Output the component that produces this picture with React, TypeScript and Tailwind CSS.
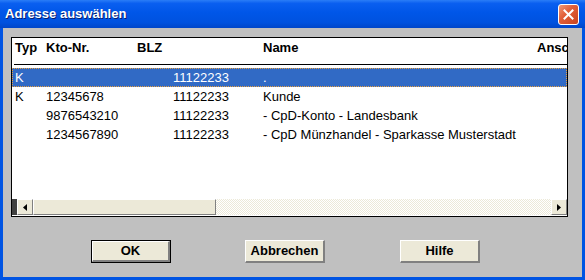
import React from 'react';

interface Row {
  typ: string;
  kto: string;
  blz: string;
  name: string;
  selected?: boolean;
}

const rows: Row[] = [
  { typ: 'K', kto: '', blz: '11122233', name: '.', selected: true },
  { typ: 'K', kto: '12345678', blz: '11122233', name: 'Kunde' },
  { typ: '', kto: '9876543210', blz: '11122233', name: '- CpD-Konto - Landesbank' },
  { typ: '', kto: '1234567890', blz: '11122233', name: '- CpD Münzhandel - Sparkasse Musterstadt' },
];

const font = "font-['Liberation_Sans',Arial,sans-serif]";

const XpButton: React.FC<{ label: string; isDefault?: boolean }> = ({ label, isDefault }) => (
  <button
    className={`w-[80px] h-[23px] ${isDefault ? 'border border-black' : ''} bg-[#ece9d8] p-0`}
  >
    <span
      className={`flex h-full w-full items-center justify-center border-t border-l border-t-white border-l-white border-b-2 border-r-2 border-b-[#808080] border-r-[#808080] text-[13px] font-bold text-black ${font}`}
    >
      {label}
    </span>
  </button>
);

const ArrowButton: React.FC<{ dir: 'left' | 'right' }> = ({ dir }) => (
  <div className="flex h-full w-[16px] shrink-0 items-center justify-center bg-[#ece9d8] border-t border-l border-t-white border-l-white border-b border-r border-b-[#808080] border-r-[#808080]">
    <svg width="4" height="7" viewBox="0 0 4 7">
      {dir === 'left' ? <path d="M4 0 L0 3.5 L4 7 Z" fill="#000" /> : <path d="M0 0 L4 3.5 L0 7 Z" fill="#000" />}
    </svg>
  </div>
);

export default function App() {
  return (
    <div className="w-[585px] h-[280px] bg-[#0054e3] flex flex-col overflow-hidden">
      {/* title bar */}
      <div className="h-[28px] flex items-center justify-between pl-[5px] pr-[6px] bg-[linear-gradient(180deg,#2a7df7_0%,#0a5ff0_12%,#0056e8_45%,#0052df_80%,#0046c9_100%)]">
        <span className={`text-white font-bold text-[13px] [text-shadow:1px_1px_0_#0a1e6e] ${font}`}>
          Adresse auswählen
        </span>
        <div className="w-[21px] h-[21px] rounded-[3px] border border-white bg-[linear-gradient(135deg,#f09a78_0%,#e2603a_40%,#c8431e_100%)] flex items-center justify-center">
          <svg width="11" height="11" viewBox="0 0 11 11">
            <path d="M1.5 1.5 L9.5 9.5 M9.5 1.5 L1.5 9.5" stroke="#fff" strokeWidth="2" strokeLinecap="square" />
          </svg>
        </div>
      </div>

      {/* body */}
      <div className="flex-1 mx-[3px] mb-[3px] bg-[#c0c0c0] flex flex-col pl-[8px] pt-[9px]">
        <div className={`w-[557px] h-[180px] border border-black bg-white flex flex-col overflow-hidden text-[13px] text-black ${font}`}>
          {/* header */}
          <div className="h-[26px] flex pl-[3px] pt-[1px] leading-[18px] font-bold text-[13px] whitespace-nowrap overflow-hidden">
            <span className="w-[31px] shrink-0">Typ</span>
            <span className="w-[91px] shrink-0">Kto-Nr.</span>
            <span className="w-[126px] shrink-0">BLZ</span>
            <span className="w-[274px] shrink-0">Name</span>
            <span className="shrink-0">Anschrift</span>
          </div>
          <div className="ml-[2px] h-[1px] bg-black" />
          <div className="h-[3px]" />

          {/* rows */}
          <div className="flex-1 flex flex-col">
            {rows.map((r, i) => (
              <div
                key={i}
                className={`h-[19px] flex items-center pl-[2px] whitespace-nowrap ${
                  r.selected ? 'bg-[#316ac5] text-white border border-dotted border-[#e8a040]' : 'border border-transparent'
                }`}
              >
                <span className="w-[31px] shrink-0">{r.typ}</span>
                <span className="w-[91px] shrink-0">{r.kto}</span>
                <span className="w-[126px] shrink-0 pl-[36px]">{r.blz}</span>
                <span className="shrink-0">{r.name}</span>
              </div>
            ))}
          </div>

          {/* horizontal scrollbar */}
          <div className="h-[16px] flex mb-[1px]">
            <div className="w-[5px] shrink-0 h-full bg-[#404040]" />
            <ArrowButton dir="left" />
            <div className="w-[183px] shrink-0 h-full bg-[#ece9d8] border-t border-l border-t-white border-l-white border-b border-r border-b-[#808080] border-r-[#808080]" />
            <div className="flex-1 h-full bg-[repeating-conic-gradient(#ece9d8_0%_25%,#ffffff_0%_50%)] bg-[length:2px_2px]" />
            <ArrowButton dir="right" />
          </div>
        </div>

        {/* buttons */}
        <div className="mt-[20px] flex">
          <div className="ml-[80px]">
            <XpButton label="OK" isDefault />
          </div>
          <div className="ml-[74px]">
            <XpButton label="Abbrechen" />
          </div>
          <div className="ml-[75px]">
            <XpButton label="Hilfe" />
          </div>
        </div>
      </div>
    </div>
  );
}
